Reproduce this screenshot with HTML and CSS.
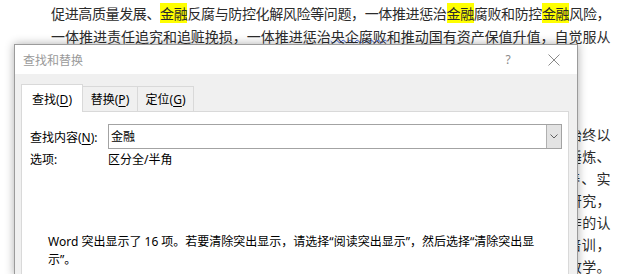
FILE: index.html
```html
<!DOCTYPE html>
<html lang="zh-CN">
<head>
  <meta charset="UTF-8">
  <meta name="viewport" content="width=device-width, initial-scale=1.0">
  <title>查找和替换</title>
  <link rel="stylesheet" href="styles.css">
</head>
<body>
  <div class="page">
    <div class="doc">
      <p class="para para-first">
        <span class="line">促进高质量发展、<mark>金融</mark>反腐与防控化解风险等问题，一体推进惩治<mark>金融</mark>腐败和防控<mark>金融</mark>风险，</span>
        <span class="line">一体推进责任追究和追赃挽损，一体推进惩治<span class="typo">央企腐败</span>和推动国有资产保值升值，自觉服从</span>
        <span class="line short">服务金融强国建设大局。</span>
      </p>
      <p class="para heading">二、下一步工作打算</p>
      <p class="para heading">（一）坚持政治引领，持续深化全面从严治党</p>
      <p class="para para-second">
        <span class="line">全面落实全面从严治党战略部署，坚持严的基调、严的措施、严的氛围长期不变，始终以</span>
        <span class="line">干部要在斗争中经受考验，在实践中增长才干，在基层一线摸爬滚打、急难险重中锤炼、</span>
        <span class="line">不断提高政治判断力、政治领悟力、政治执行力，全面加强政治素养、理论素养、实</span>
        <span class="line">践能力的提升，坚持学思用贯通、知信行统一，大兴调查研究之风，注重加强理论研究，</span>
        <span class="line">不断深化对新时代<mark>金融</mark>工作的规律性认识，全面切实提高对<mark>金融</mark>风险防控和监管工作的认</span>
        <span class="line">识和把握，持续加强<mark>金融</mark>纪检监察干部队伍专业化建设，分层分类全员开展业务培训，</span>
        <span class="line">坚持以案促改、以案促治，用好身边典型案例深入开展警示教育和以案说纪的案例教学。</span>
      </p>
    </div>

    <div class="dialog">
      <div class="titlebar">
        <span class="title">查找和替换</span>
        <span class="title-btn help">?</span>
        <span class="title-btn close">
          <svg width="12" height="12" viewBox="0 0 12 12"><path d="M0.5 0.5 L11.5 11.5 M11.5 0.5 L0.5 11.5" stroke="#8a8a8a" stroke-width="1" fill="none"/></svg>
        </span>
      </div>
      <div class="dialog-body">
        <div class="tabs">
          <div class="tab tab-active">查找(<u>D</u>)</div>
          <div class="tab tab-replace">替换(<u>P</u>)</div>
          <div class="tab tab-goto">定位(<u>G</u>)</div>
        </div>
        <div class="panel">
          <div class="field-row">
            <label class="field-label">查找内容(<u>N</u>):</label>
            <div class="combo">
              <span class="combo-text">金融</span>
              <span class="combo-btn">
                <svg width="8" height="5" viewBox="0 0 8 5"><path d="M0.5 0.5 L4 4 L7.5 0.5" stroke="#606060" stroke-width="1" fill="none"/></svg>
              </span>
            </div>
          </div>
          <div class="option-row">
            <span class="field-label">选项:</span>
            <span>区分全/半角</span>
          </div>
          <p class="message">Word 突出显示了 16 项。若要清除突出显示，请选择“阅读突出显示”，然后选择“清除突出显示”。</p>
        </div>
      </div>
    </div>
  </div>
</body>
</html>
```

FILE: styles.css
```css
html, body {
  margin: 0;
  height: 100%;
  overflow: hidden;
  background-color: #fff;
}
.page {
  position: relative;
  height: 100%;
}

/* document behind the dialog */
.doc {
  padding: 2px 0 0 51px;
  font-family: "Noto Sans CJK SC", sans-serif;
  font-size: 14px;
  color: #2b2b2b;
}
.para {
  margin: 0;
}
.para-first .line {
  line-height: 23px;
}
.heading {
  line-height: 22px;
}
.para-first + .heading {
  margin-top: 8px;
}
.para-second .line {
  line-height: 22px;
}
.line {
  display: block;
  width: 559px;
  letter-spacing: -0.5px;
  text-align: justify;
  text-align-last: justify;
}
.line.short {
  text-align-last: left;
}
mark {
  background-color: #ffff00;
  color: inherit;
}
.typo {
  text-decoration: underline wavy #3f5fd8;
  text-decoration-thickness: 1px;
  text-underline-offset: -3px;
}

/* dialog */
.dialog {
  position: absolute;
  left: 14px;
  top: 44px;
  width: 564px;
  height: 232px;
  box-sizing: border-box;
  display: flex;
  flex-direction: column;
  border: 1px solid #9b9b9b;
  background-color: #f0f0f0;
  box-shadow: 0 0 9px rgba(0, 0, 0, 0.32);
  font-family: "Noto Sans", "Noto Sans CJK SC", sans-serif;
  font-size: 12px;
  color: #000;
}
.titlebar {
  display: flex;
  align-items: center;
  height: 29px;
  padding-left: 8px;
  background-color: #fff;
}
.title {
  color: #9a9a9a;
  flex: 1;
}
.title-btn {
  width: 46px;
  display: flex;
  justify-content: center;
  align-items: center;
  color: #8a8a8a;
  font-size: 12px;
}

.dialog-body {
  flex: 1;
  display: flex;
  flex-direction: column;
  padding: 10px 8px 0 6px;
}
.tabs {
  display: flex;
  align-items: flex-end;
  height: 27px;
}
.tab {
  display: flex;
  align-items: flex-end;
  justify-content: center;
  box-sizing: border-box;
  height: 25px;
  padding-bottom: 3px;
  line-height: 16px;
  border: 1px solid #d9d9d9;
  border-bottom: none;
  background-color: #f0f0f0;
  margin-left: -1px;
}
.tab u {
  text-underline-offset: 2px;
}
.tab-active {
  position: relative;
  z-index: 1;
  width: 62px;
  height: 28px;
  margin-left: 0;
  margin-bottom: -1px;
  padding-bottom: 4px;
  background-color: #fff;
}
.tab-replace {
  width: 56px;
}
.tab-goto {
  width: 57px;
}

.panel {
  flex: 1;
  padding: 12px 0 0 8px;
  border: 1px solid #d9d9d9;
  border-bottom: none;
  background-color: #fff;
}
.field-row {
  display: flex;
  align-items: center;
  height: 25px;
}
.field-label {
  width: 78px;
  flex-shrink: 0;
}
.field-label u {
  text-underline-offset: 2px;
}
.combo {
  display: flex;
  width: 454px;
  height: 25px;
  box-sizing: border-box;
  border: 1px solid #a3a3a3;
}
.combo-text {
  flex: 1;
  padding-left: 2px;
  line-height: 23px;
}
.combo-btn {
  display: flex;
  align-items: center;
  justify-content: center;
  width: 15px;
  box-sizing: border-box;
  border-left: 1px solid #b0b0b0;
  background-color: #e3e3e3;
}
.option-row {
  display: flex;
  margin-top: 3px;
  line-height: 16px;
}
.message {
  width: 505px;
  margin: 65px 0 0 18px;
  line-height: 18px;
}
```
